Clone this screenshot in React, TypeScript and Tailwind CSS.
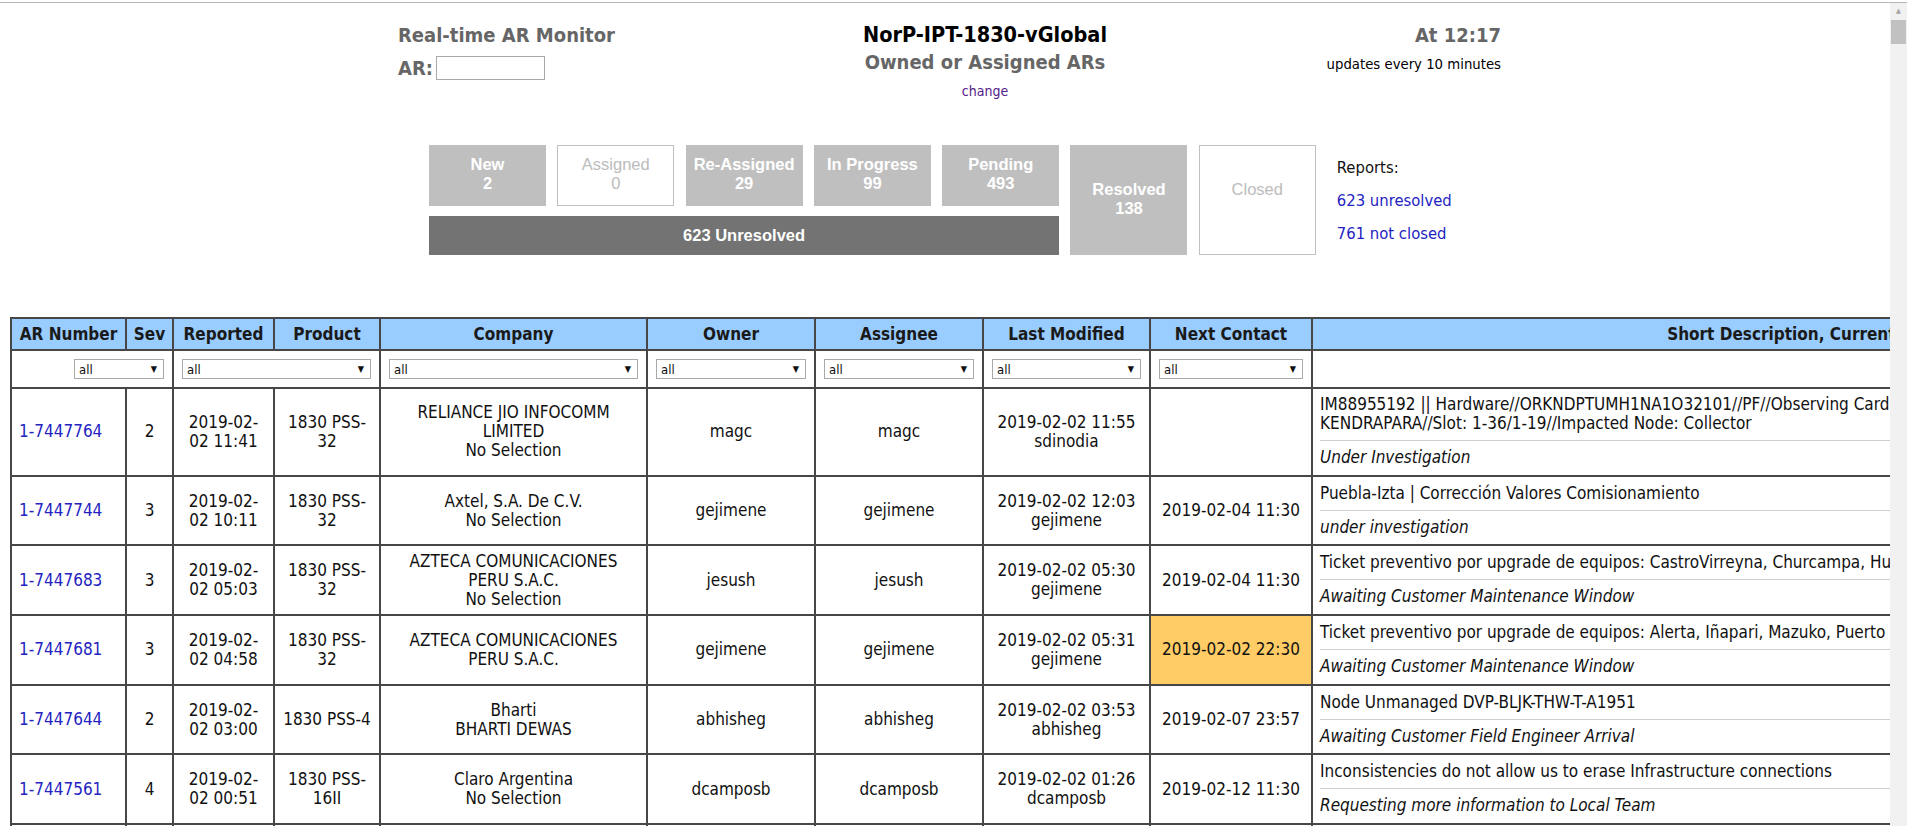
import React from 'react';

type Row = {
  ar: string;
  sev: string;
  reported: string[];
  product: string[];
  company: string[];
  owner: string;
  assignee: string;
  modified: string[];
  next: string;
  late?: boolean;
  desc: string[];
  status: string;
};

const rows: Row[] = [
  {
    ar: '1-7447764', sev: '2', reported: ['2019-02-', '02 11:41'], product: ['1830 PSS-', '32'],
    company: ['RELIANCE JIO INFOCOMM', 'LIMITED', 'No Selection'], owner: 'magc', assignee: 'magc',
    modified: ['2019-02-02 11:55', 'sdinodia'], next: '',
    desc: ['IM88955192 || Hardware//ORKNDPTUMH1NA1O32101//PF//Observing Card Failure on node', 'KENDRAPARA//Slot: 1-36/1-19//Impacted Node: Collector'],
    status: 'Under Investigation',
  },
  {
    ar: '1-7447744', sev: '3', reported: ['2019-02-', '02 10:11'], product: ['1830 PSS-', '32'],
    company: ['Axtel, S.A. De C.V.', 'No Selection'], owner: 'gejimene', assignee: 'gejimene',
    modified: ['2019-02-02 12:03', 'gejimene'], next: '2019-02-04 11:30',
    desc: ['Puebla-Izta | Corrección Valores Comisionamiento'], status: 'under investigation',
  },
  {
    ar: '1-7447683', sev: '3', reported: ['2019-02-', '02 05:03'], product: ['1830 PSS-', '32'],
    company: ['AZTECA COMUNICACIONES', 'PERU S.A.C.', 'No Selection'], owner: 'jesush', assignee: 'jesush',
    modified: ['2019-02-02 05:30', 'gejimene'], next: '2019-02-04 11:30',
    desc: ['Ticket preventivo por upgrade de equipos: CastroVirreyna, Churcampa, Huancavelica'],
    status: 'Awaiting Customer Maintenance Window',
  },
  {
    ar: '1-7447681', sev: '3', reported: ['2019-02-', '02 04:58'], product: ['1830 PSS-', '32'],
    company: ['AZTECA COMUNICACIONES', 'PERU S.A.C.'], owner: 'gejimene', assignee: 'gejimene',
    modified: ['2019-02-02 05:31', 'gejimene'], next: '2019-02-02 22:30', late: true,
    desc: ['Ticket preventivo por upgrade de equipos: Alerta, Iñapari, Mazuko, Puerto Maldonado'],
    status: 'Awaiting Customer Maintenance Window',
  },
  {
    ar: '1-7447644', sev: '2', reported: ['2019-02-', '02 03:00'], product: ['1830 PSS-4'],
    company: ['Bharti', 'BHARTI DEWAS'], owner: 'abhisheg', assignee: 'abhisheg',
    modified: ['2019-02-02 03:53', 'abhisheg'], next: '2019-02-07 23:57',
    desc: ['Node Unmanaged DVP-BLJK-THW-T-A1951'], status: 'Awaiting Customer Field Engineer Arrival',
  },
  {
    ar: '1-7447561', sev: '4', reported: ['2019-02-', '02 00:51'], product: ['1830 PSS-', '16II'],
    company: ['Claro Argentina', 'No Selection'], owner: 'dcamposb', assignee: 'dcamposb',
    modified: ['2019-02-02 01:26', 'dcamposb'], next: '2019-02-12 11:30',
    desc: ['Inconsistencies do not allow us to erase Infrastructure connections'],
    status: 'Requesting more information to Local Team',
  },
];

const Lines = ({ items }: { items: string[] }) => (
  <>
    {items.map((t, i) => (
      <div key={i}>{t}</div>
    ))}
  </>
);

const Pick = ({ className = '' }: { className?: string }) => (
  <div className={`h-[20px] border border-[#a9a9a9] bg-white flex items-center justify-between pl-[4px] pr-[6px] text-[13px] text-left leading-none ${className}`}>
    <span>all</span>
    <span className="text-[9px]">▼</span>
  </div>
);

const td = 'border-2 border-[#474747] px-[6px] text-center align-middle';
const th = 'border-2 border-[#474747] px-[6px] h-[32px] bg-[#99ccff] font-bold text-center text-[#1a1a1a] whitespace-nowrap';

const StatBox = ({ label, count, solid, tall }: { label: string; count: string; solid: boolean; tall?: boolean }) => (
  <div
    className={`flex flex-col items-center justify-center pb-[3px] text-[16.5px] leading-[19px] ${tall ? 'row-span-2' : ''} ${
      solid ? 'bg-[#bfbfbf] text-white font-bold' : 'bg-white border border-[#bfbfbf] text-[#bcbcbc]'
    }`}
  >
    <div>{label}</div>
    <div>{count || '\u00a0'}</div>
  </div>
);

export default function App() {
  return (
    <div className="h-[826px] w-full overflow-hidden bg-white pt-[2px]">
      <div className="h-[824px] border-t border-[#b5b5b5] flex font-['DejaVu_Sans_Condensed','DejaVu_Sans',sans-serif] text-[17px] text-[#111]">
        <div className="flex-1 min-w-0 overflow-hidden">
          {/* header */}
          <div className="h-[142px] flex pl-[398px] pt-[20px]">
            <div className="w-[462px] text-[#666] font-bold text-[20px] leading-[24px]">
              <div>Real-time AR Monitor</div>
              <div className="mt-[9px] flex items-center gap-[3px]">
                <span>AR:</span>
                <div className="w-[109px] h-[24px] border border-[#a9a9a9] bg-white" />
              </div>
            </div>
            <div className="w-[250px] text-center">
              <div className="font-bold text-[21.5px] leading-[24px] text-black whitespace-nowrap -mx-[20px]">NorP-IPT-1830-vGlobal</div>
              <div className="mt-[3px] font-bold text-[20px] leading-[24px] text-[#666] whitespace-nowrap -mx-[20px]">Owned or Assigned ARs</div>
              <div className="mt-[9px] text-[14px] leading-[16px] text-[#551a8b]">change</div>
            </div>
            <div className="w-[391px] text-right">
              <div className="font-bold text-[20px] leading-[24px] text-[#666]">At 12:17</div>
              <div className="mt-[9px] text-[14.75px] leading-[16px] text-black">updates every 10 minutes</div>
            </div>
          </div>

          {/* status boxes */}
          <div className="flex pl-[429px] font-['Liberation_Sans',Arial,sans-serif]">
            <div className="grid grid-cols-[repeat(7,117px)] grid-rows-[61px_39px] gap-x-[11.3px] gap-y-[10px]">
              <StatBox label="New" count="2" solid />
              <StatBox label="Assigned" count="0" solid={false} />
              <StatBox label="Re-Assigned" count="29" solid />
              <StatBox label="In Progress" count="99" solid />
              <StatBox label="Pending" count="493" solid />
              <StatBox label="Resolved" count="138" solid tall />
              <StatBox label="Closed" count="" solid={false} tall />
              <div className="col-span-5 bg-[#737373] text-white font-bold text-[16.5px] flex items-center justify-center">
                623 Unresolved
              </div>
            </div>
            <div className="ml-[21px] pt-[13px] font-['DejaVu_Sans_Condensed','DejaVu_Sans',sans-serif] text-[16.5px] leading-[20px]">
              <div>Reports:</div>
              <div className="mt-[13px] text-[#2323c2]">623 unresolved</div>
              <div className="mt-[13px] text-[#2323c2]">761 not closed</div>
            </div>
          </div>

          {/* table */}
          <div className="mt-[62px] ml-[10px]">
            <table className="table-fixed border-collapse w-[2301px] leading-[19px]">
              <colgroup>
                <col className="w-[115px]" />
                <col className="w-[47px]" />
                <col className="w-[101px]" />
                <col className="w-[106px]" />
                <col className="w-[267px]" />
                <col className="w-[168px]" />
                <col className="w-[168px]" />
                <col className="w-[167px]" />
                <col className="w-[162px]" />
                <col className="w-[1000px]" />
              </colgroup>
              <thead>
                <tr>
                  <th className={th}>AR Number</th>
                  <th className={th}>Sev</th>
                  <th className={th}>Reported</th>
                  <th className={th}>Product</th>
                  <th className={th}>Company</th>
                  <th className={th}>Owner</th>
                  <th className={th}>Assignee</th>
                  <th className={th}>Last Modified</th>
                  <th className={th}>Next Contact</th>
                  <th className={th}>Short Description, Current Status</th>
                </tr>
                <tr>
                  <td colSpan={2} className="border-2 border-[#474747] h-[38px] px-[8px]">
                    <Pick className="w-[90px] ml-auto" />
                  </td>
                  <td colSpan={2} className="border-2 border-[#474747] px-[8px]">
                    <Pick />
                  </td>
                  <td className="border-2 border-[#474747] px-[8px]">
                    <Pick />
                  </td>
                  <td className="border-2 border-[#474747] px-[8px]">
                    <Pick />
                  </td>
                  <td className="border-2 border-[#474747] px-[8px]">
                    <Pick />
                  </td>
                  <td className="border-2 border-[#474747] px-[8px]">
                    <Pick />
                  </td>
                  <td className="border-2 border-[#474747] px-[8px]">
                    <Pick />
                  </td>
                  <td className="border-2 border-[#474747]" />
                </tr>
              </thead>
              <tbody>
                {rows.map((r, i) => (
                  <tr key={r.ar}>
                    <td className={`${td} text-left pl-[7px] text-[#2323c2]`}>{r.ar}</td>
                    <td className={td}>{r.sev}</td>
                    <td className={td}><Lines items={r.reported} /></td>
                    <td className={td}><Lines items={r.product} /></td>
                    <td className={td}><Lines items={r.company} /></td>
                    <td className={td}>{r.owner}</td>
                    <td className={td}>{r.assignee}</td>
                    <td className={td}><Lines items={r.modified} /></td>
                    <td className={`${td} ${r.late ? 'bg-[#ffcc66]' : ''}`}>{r.next}</td>
                    <td className="border-2 border-[#474747] pl-[7px] text-left align-middle whitespace-nowrap">
                      <div className={`border-b border-[#cfcfcf] pb-[7px] ${i === 0 ? 'pt-[6px]' : 'pt-[7px]'}`}>
                        <Lines items={r.desc} />
                      </div>
                      <div className="pt-[7px] pb-[7.7px] italic">{r.status}</div>
                    </td>
                  </tr>
                ))}
                <tr>
                  <td className={`${td} h-[70px]`} />
                  <td className={td} />
                  <td className={td} />
                  <td className={td} />
                  <td className={td} />
                  <td className={td} />
                  <td className={td} />
                  <td className={td} />
                  <td className={td} />
                  <td className={td} />
                </tr>
              </tbody>
            </table>
          </div>
        </div>

        {/* scrollbar */}
        <div className="w-[17px] shrink-0 bg-[#f1f1f1] flex flex-col items-center">
          <div className="h-[17px] flex items-center justify-center text-[7px] text-[#a3a3a3]">▲</div>
          <div className="w-[15px] h-[24px] bg-[#c1c1c1]" />
        </div>
      </div>
    </div>
  );
}
